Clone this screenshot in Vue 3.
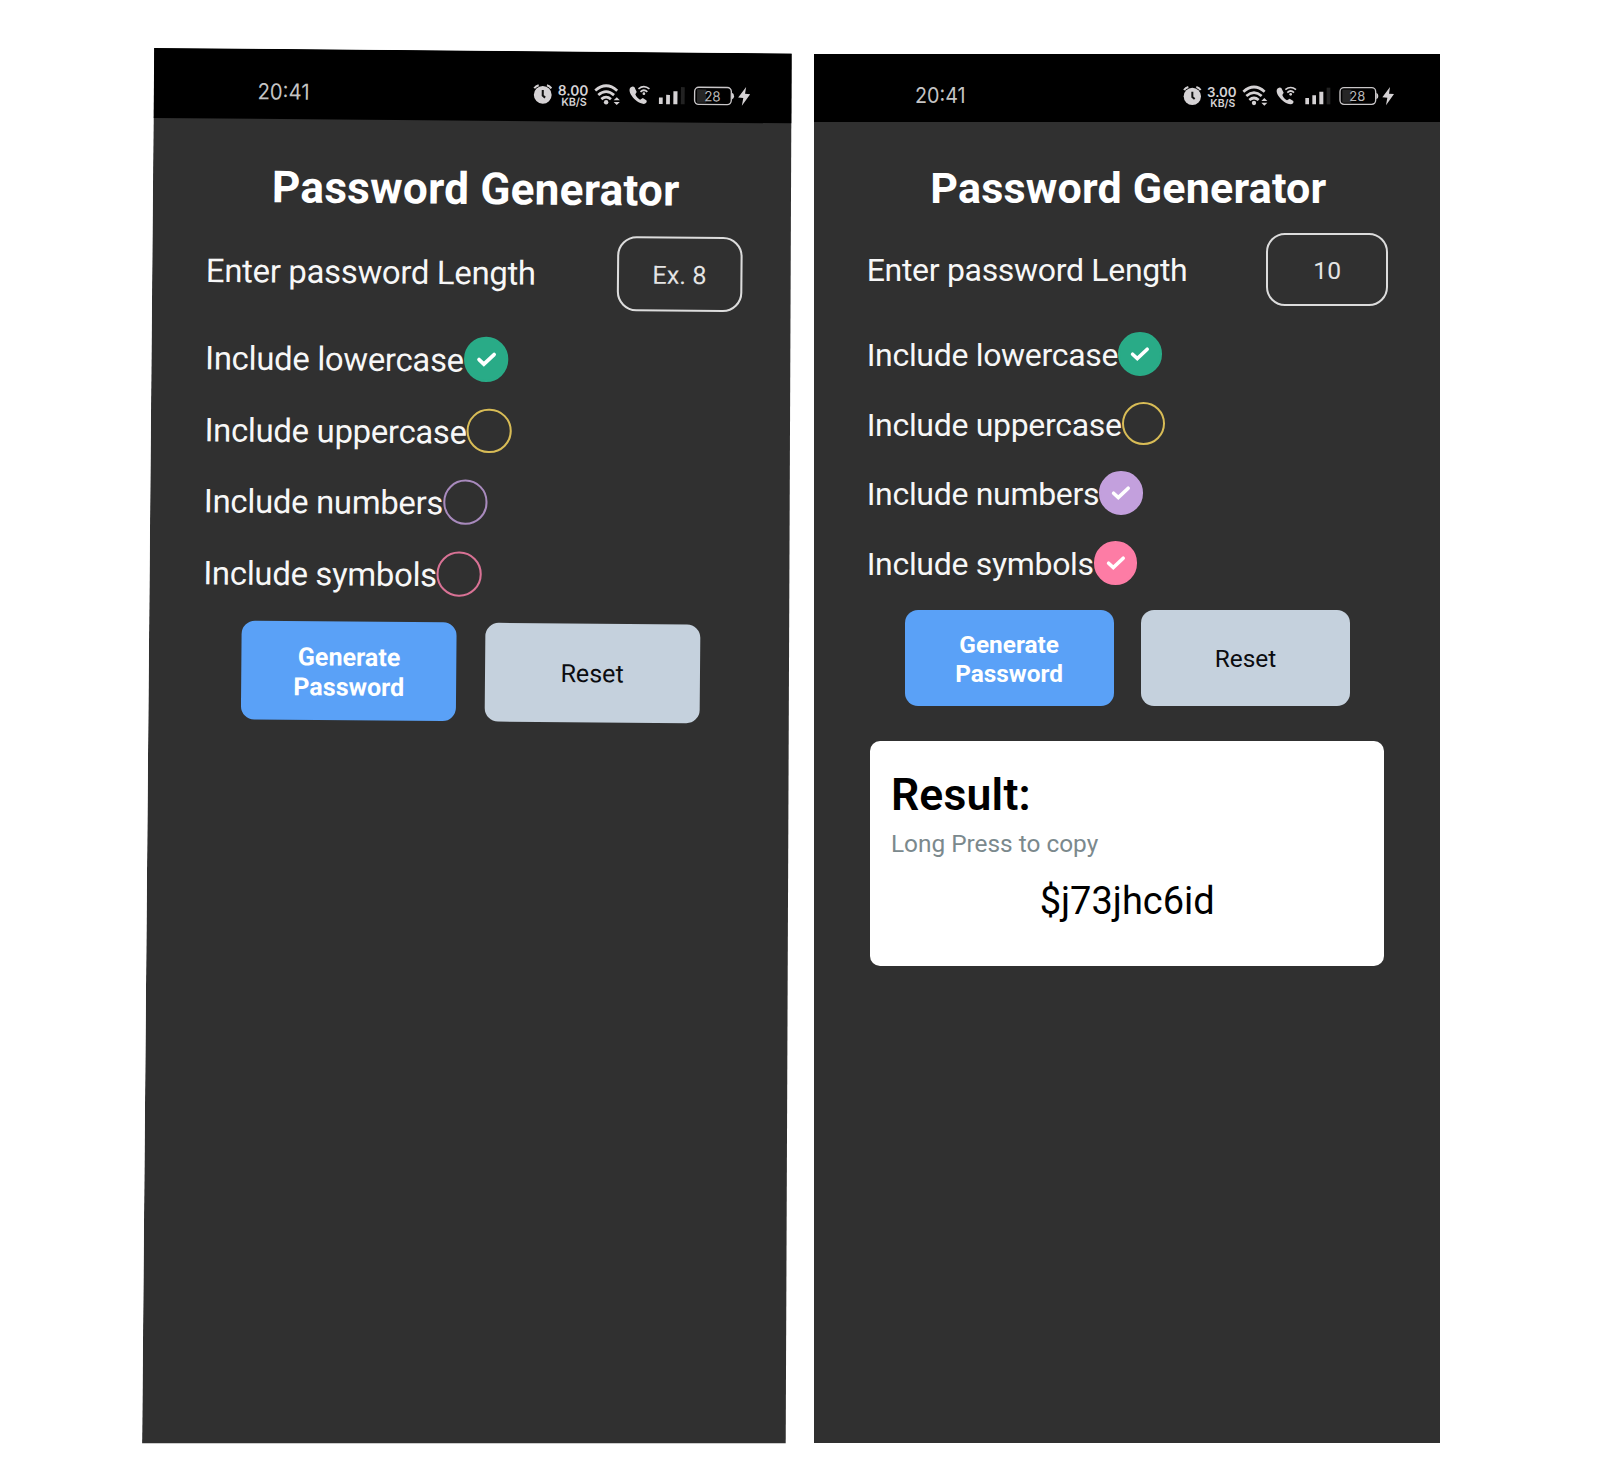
<script setup>
const screens = [
  {
    id: 'initial',
    speed: '8.00',
    length: 'Ex. 8',
    checked: ['lowercase'],
    result: null,
  },
  {
    id: 'generated',
    speed: '3.00',
    length: '10',
    checked: ['lowercase', 'numbers', 'symbols'],
    result: '$j73jhc6id',
  },
]

const options = ['lowercase', 'uppercase', 'numbers', 'symbols']
</script>

<template>
  <main class="board">
    <div v-for="s in screens" :key="s.id" class="frame" :class="s.id">
      <section class="phone">
        <header class="status">
          <svg class="clock" width="60" height="32" viewBox="0 0 60 32">
            <text x="0" y="22" textLength="50.5" lengthAdjust="spacingAndGlyphs">20:41</text>
          </svg>
          <svg class="indicators" width="230" height="45" viewBox="0 0 690 135">
            <!-- alarm -->
            <circle cx="52" cy="64" r="26" />
            <path class="line" d="M27 45 Q32 38 40 36 M64 36 Q72 38 77 45" stroke-width="6" />
            <path d="M52 50 V66 L59 72" fill="none" stroke="#111" stroke-width="6" />
            <!-- network speed -->
            <text class="speed" x="96" y="65" textLength="89" lengthAdjust="spacingAndGlyphs">{{ s.speed }}</text>
            <text class="unit" x="106" y="95" textLength="75" lengthAdjust="spacingAndGlyphs">KB/S</text>
            <!-- wifi -->
            <path class="line" d="M205 50 Q237 22 269 50 M214 63 Q237 43 260 63 M223 75 Q237 63 251 75" stroke-width="8" />
            <circle cx="237" cy="84" r="6.5" />
            <path d="M259 78 L268 69 L277 78 Z M259 83 L268 92 L277 83 Z" />
            <!-- wifi call -->
            <path d="M309 40 C303 44 304 54 311 64 C320 77 333 87 347 88 C353 88 357 83 355 78 L344 71 L336 76 C329 72 324 66 322 60 L326 53 L319 39 Q314 36 309 40 Z" />
            <path class="line" d="M331 44 Q347 31 363 44 M337 53 Q347 43 357 53" stroke-width="5" />
            <circle cx="347" cy="58" r="4" />
            <!-- signal -->
            <path d="M391 69 h11 v19 h-11 Z M412 61 h11 v27 h-11 Z M433 50 h12 v38 h-12 Z" />
            <path d="M455 38 h11 v50 h-11 Z" fill="#222" />
            <!-- battery -->
            <rect x="502" y="44" width="27" height="39" fill="#262626" />
            <rect x="495" y="38" width="107" height="50" rx="12" fill="none" stroke="#c9c6c8" stroke-width="4" />
            <path d="M604 53 Q610 55 610 63 Q610 71 604 73 Z" />
            <text class="charge" x="523" y="79" textLength="48" lengthAdjust="spacingAndGlyphs">28</text>
            <path d="M645 36 L622 67 L637 68 L633 91 L657 57 L642 56 Z" />
          </svg>
        </header>

        <h1>Password Generator</h1>

        <div class="length">
          <span class="label">Enter password Length</span>
          <div class="input"><span>{{ s.length }}</span></div>
        </div>

        <div v-for="o in options" :key="o" class="option">
          <span class="label">Include {{ o }}</span>
          <span class="check" :class="[o, { on: s.checked.includes(o) }]">
            <svg v-if="s.checked.includes(o)" width="20" height="16" viewBox="0 0 20 16">
              <path d="M2.6 8.2 L7.3 12.6 L17.2 3.2" />
            </svg>
          </span>
        </div>

        <div class="actions">
          <button class="generate">Generate<br />Password</button>
          <button class="reset">Reset</button>
        </div>

        <article v-if="s.result" class="card">
          <h2>Result:</h2>
          <p class="hint">Long Press to copy</p>
          <p class="password">{{ s.result }}</p>
        </article>
      </section>
    </div>
  </main>
</template>

<style>
body {
  margin: 0;
  background: #fff;
}
</style>

<style scoped>
.board {
  box-sizing: border-box;
  width: 1600px;
  height: 1482px;
  padding: 48px 0 0 142px;
  display: flex;
  align-items: flex-start;
  background: #fff;
  overflow: hidden;
  font-family: Roboto, 'Liberation Sans', sans-serif;
}

.frame {
  flex: none;
}

.initial {
  width: 650px;
  height: 1395.3px;
  padding-left: 12.2px;
  box-sizing: border-box;
  margin-right: 22.4px;
  clip-path: polygon(12.2px 0, 649.6px 5.4px, 643.7px 1395.3px, 0 1395.3px);
}

.initial .phone {
  transform: matrix(1.0285, 0.00875, -0.00875, 1.0285, 0, 0);
  transform-origin: 0 0;
}

.generated {
  margin-top: 6px;
}

.phone {
  width: 626px;
  height: 1389px;
  background: #303030;
  color: #f7f7f7;
}

.status {
  box-sizing: border-box;
  height: 68px;
  padding: 21px 0 0 100.5px;
  display: flex;
  background: #000;
  font-family: Inter, Roboto, sans-serif;
}

.clock {
  margin: 6.4px 200px 0 0;
  fill: #c4c4c4;
  font-size: 21.5px;
  overflow: visible;
}

.indicators {
  fill: #d5d2d4;
}

.line {
  fill: none;
  stroke: #d5d2d4;
}

.speed {
  font-size: 41px;
  font-weight: 600;
}

.unit {
  font-size: 32px;
  font-weight: 600;
}

.charge {
  font-size: 41px;
  fill: #bbb;
}

h1 {
  margin: 39.6px 0 19.1px;
  padding-left: 2px;
  font-size: 43px;
  line-height: 52px;
  font-weight: 700;
  letter-spacing: 0.2px;
  text-align: center;
  color: #fff;
}

.length {
  margin: 0 52.5px 12.9px 52.3px;
  display: flex;
  justify-content: space-between;
  align-items: center;
}

.label {
  padding-top: 2px;
  font-size: 32px;
  line-height: 38px;
  letter-spacing: -0.31px;
  white-space: nowrap;
}

.input {
  box-sizing: border-box;
  width: 121.5px;
  height: 73.6px;
  padding-top: 1.6px;
  display: flex;
  align-items: center;
  justify-content: center;
  border: 2px solid #dcdcdc;
  border-radius: 19px;
  font-size: 24.6px;
  color: #e4e4e4;
}

.option {
  height: 69.6px;
  padding-left: 52.3px;
  display: flex;
  align-items: center;
}

.check {
  box-sizing: border-box;
  width: 43.6px;
  height: 43.6px;
  display: flex;
  align-items: center;
  justify-content: center;
  border: 2px solid;
  border-radius: 50%;
}

.check path {
  fill: none;
  stroke: #fff;
  stroke-width: 3.6;
  stroke-linecap: round;
}

.lowercase { border-color: #29ab87; }
.uppercase { border-color: #d8bc56; }
.numbers { border-color: #a88abd; }
.symbols { border-color: #d97295; }
.lowercase.on { background: #29ab87; }
.numbers.on { background: #c3a0dd; border-color: #c3a0dd; }
.symbols.on { background: #fd7ca5; border-color: #fd7ca5; }

.actions {
  margin: 12.4px 0 0 90.2px;
  display: flex;
  gap: 27.4px;
}

button {
  width: 209px;
  height: 96.4px;
  padding: 3px 0 0;
  border: 0;
  border-radius: 13px;
  font-family: inherit;
  font-size: 24.4px;
  line-height: 28.3px;
}

.generate {
  background: #5aa1f7;
  color: #fff;
  font-weight: 700;
}

.reset {
  background: #c5d1dd;
  color: #0b0c10;
}

.card {
  box-sizing: border-box;
  width: 514.6px;
  height: 225.2px;
  margin: 34.6px 0 0 55.5px;
  padding: 28px 21px 0;
  border-radius: 10px;
  background: #fff;
  color: #000;
}

h2 {
  margin: 0;
  font-size: 44.5px;
  line-height: 52px;
  font-weight: 600;
  letter-spacing: 0.2px;
}

.hint {
  margin: 9.5px 0 20.8px;
  font-size: 24.4px;
  line-height: 28px;
  color: #7b898d;
}

.password {
  margin: 0;
  font-size: 38px;
  line-height: 44px;
  text-align: center;
}
</style>
